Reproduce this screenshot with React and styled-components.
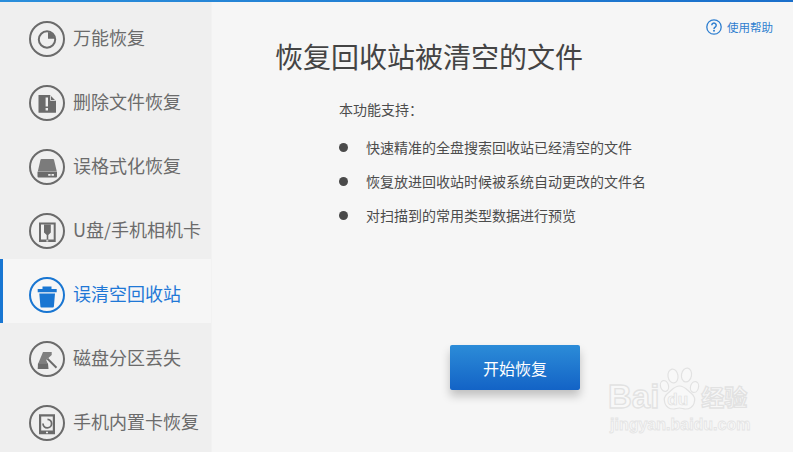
import React from 'react';
import styled, { createGlobalStyle } from 'styled-components';

const GlobalStyle = createGlobalStyle`
  html, body {
    margin: 0;
    padding: 0;
    background: #f6f6f6;
  }
  body {
    font-family: "Noto Sans CJK SC", "Liberation Sans", sans-serif;
  }
`;

const Window = styled.div`
  position: relative;
  width: 793px;
  height: 452px;
  overflow: hidden;
  display: flex;
  flex-direction: column;
  background: #f6f6f6;
`;

const TopBar = styled.div`
  flex: none;
  height: 2px;
  background: linear-gradient(90deg, #2a8edb, #1a6fcb);
`;

const Body = styled.div`
  flex: 1;
  display: flex;
  min-height: 0;
`;

const Sidebar = styled.nav`
  flex: none;
  width: 211px;
  padding-top: 1px;
  background: #efefef;
  border-right: 1px solid #f2f2f2;
`;

const NavRow = styled.div`
  box-sizing: border-box;
  height: 64px;
  padding: 18px 0 0 26px;
  display: flex;
  align-items: flex-start;
  gap: 8px;
  color: ${({ $active }) => ($active ? '#1f78d6' : '#6b6b6b')};
  background: ${({ $active }) => ($active ? '#f6f6f6' : 'transparent')};
  border-left: 3px solid ${({ $active }) => ($active ? '#1976d2' : 'transparent')};
`;

const NavIcon = styled.svg`
  flex: none;
  width: 36px;
  height: 36px;
`;

const NavLabel = styled.span`
  font-size: 18px;
  line-height: 36px;
  white-space: nowrap;
  margin-top: -2px;
`;

const Main = styled.main`
  position: relative;
  flex: 1;
  padding: 34px 0 0 63px;
`;

const HelpLink = styled.a`
  position: absolute;
  top: 16px;
  right: 20px;
  display: flex;
  align-items: center;
  gap: 5px;
  font-size: 11.5px;
  line-height: 18px;
  color: #2f7fd0;
`;

const Title = styled.h1`
  margin: 0;
  font-size: 28px;
  font-weight: 400;
  line-height: 40px;
  color: #444;
`;

const Details = styled.div`
  margin: 23px 0 0 64px;
  font-size: 14px;
  color: #4c4c4c;
`;

const Intro = styled.div`
  line-height: 20px;
`;

const FeatureList = styled.ul`
  list-style: none;
  margin: 18px 0 0;
  padding: 0;
  display: flex;
  flex-direction: column;
  gap: 14px;
`;

const Feature = styled.li`
  display: flex;
  align-items: center;
  gap: 18px;
  line-height: 20px;
  white-space: nowrap;

  &::before {
    content: '';
    width: 9px;
    height: 9px;
    border-radius: 50%;
    background: #4a4a4a;
  }
`;

const StartButton = styled.button`
  position: absolute;
  top: 343px;
  left: 238px;
  width: 130px;
  height: 45px;
  border: 0;
  border-radius: 2px;
  background: linear-gradient(180deg, #2c8cd8, #1363c6);
  box-shadow: 0 6px 10px rgba(0, 0, 0, 0.22);
  color: #fff;
  font-family: inherit;
  font-size: 16px;
`;

const Watermark = styled.div`
  position: absolute;
  left: 608px;
  top: 367px;
  width: 150px;
  height: 70px;
  pointer-events: none;
`;

const MarkRow = styled.div`
  display: flex;
  align-items: flex-end;
  height: 44px;
  font-family: "Liberation Sans", sans-serif;
  font-weight: 700;
  font-size: 33px;
  line-height: 29px;
  color: #f8f8f8;
  -webkit-text-stroke: 1.3px #e2e2e2;
`;

const MarkCjk = styled.span`
  margin-left: 1px;
  font-family: "Noto Sans CJK SC", sans-serif;
  font-size: 23px;
  line-height: 29px;
  font-weight: 700;
`;

const PawWrap = styled.span`
  position: relative;
  flex: none;
  width: 41px;
  height: 44px;
  display: block;
`;

const PawText = styled.span`
  position: absolute;
  left: 8px;
  bottom: 1px;
  font-size: 17px;
  line-height: 20px;
  -webkit-text-stroke: 0.7px #e0e0e0;
`;

const MarkUrl = styled.div`
  margin-top: 5px;
  margin-left: 2px;
  font-family: "Liberation Sans", sans-serif;
  font-size: 16px;
  font-weight: 700;
  line-height: 18px;
  color: #f8f8f8;
  -webkit-text-stroke: 0.8px #e4e4e4;
`;

const ring = (color) => <circle cx="18" cy="18" r="17" fill="none" stroke={color} strokeWidth="2" />;

const navItems = [
  {
    label: '万能恢复',
    art: (c) => (
      <>
        <circle cx="18" cy="18.500" r="8.200" fill="none" stroke={c} strokeWidth="2" />
        <path d="M19 11a7 7 0 0 1 6.500 6.800H19z" fill={c} />
      </>
    ),
  },
  {
    label: '删除文件恢复',
    art: (c) => (
      <>
        <path
          fillRule="evenodd"
          d="M9.500 10h11.500l6 6v11.200a.6.600 0 0 1-.6.600H10.100a.6.600 0 0 1-.6-.6zM16.600 12.500v9h2.400v-9zm0 10.500v2.500h2.400V23z"
          fill={c}
        />
        <path d="M21.500 10.500v5h5" fill="none" stroke="#efefef" strokeWidth="0.800" />
      </>
    ),
  },
  {
    label: '误格式化恢复',
    art: (c) => (
      <>
        <path d="M12.500 10h11.500a1 1 0 0 1 1 .8L27.800 22.500H8.800L11.500 10.800a1 1 0 0 1 1-.8z" fill={c} opacity="0.88" />
        <path
          fillRule="evenodd"
          d="M8.500 22.800h19.500V27.500a1 1 0 0 1-1 1h-17.500a1 1 0 0 1-1-1zM19.200 25v1.800h2.400V25zm3.300 0v1.800h2.400V25z"
          fill={c}
        />
      </>
    ),
  },
  {
    label: 'U盘/手机相机卡',
    art: (c) => (
      <>
        <path
          fillRule="evenodd"
          d="M10 9.500h16.700v19.500H10zM12 11.500v15h12.700v-15zM17.300 27.200v1.200h2v-1.200z"
          fill={c}
        />
        <path d="M15 11.500h6.800v8l-2.500 2.600v4.400h-1.600v-4.400L15 19.500z" fill={c} />
      </>
    ),
  },
  {
    label: '误清空回收站',
    active: true,
    art: (c) => (
      <>
        <path d="M13.500 9.500h9V12h5.200v3.300H8.700V12h4.800z" fill={c} />
        <path d="M10.300 16.400h15.700l-1.100 13.200a1 1 0 0 1-1 .9H12.400a1 1 0 0 1-1-.9z" fill={c} />
      </>
    ),
  },
  {
    label: '磁盘分区丢失',
    art: (c) => (
      <>
        <path d="M14 11h8.700v3l-5.500 5 1.500 3.500H9.200z" fill={c} opacity="0.85" />
        <path d="M9 22.300h10l.5 5.700H8.700z" fill={c} />
        <path d="M18.500 17.700l9 9" stroke={c} strokeWidth="2" />
      </>
    ),
  },
  {
    label: '手机内置卡恢复',
    art: (c) => (
      <>
        <path
          fillRule="evenodd"
          d="M10 9.300h16v20H10zM12.200 11.500v14h11.600v-14zM17 26.700v1.500h2v-1.500z"
          fill={c}
        />
        <path d="M18.500 14.300a4.300 4.300 0 1 1-4.500 4.300" fill="none" stroke={c} strokeWidth="1.800" />
      </>
    ),
  },
];

const features = [
  '快速精准的全盘搜索回收站已经清空的文件',
  '恢复放进回收站时候被系统自动更改的文件名',
  '对扫描到的常用类型数据进行预览',
];

const HelpIcon = () => (
  <svg width="16" height="16" viewBox="0 0 16 16">
    <circle cx="8" cy="8" r="7.200" fill="none" stroke="#2f7fd0" strokeWidth="1.300" />
    <path
      d="M5.800 6.300a2.200 2.200 0 1 1 3.400 1.800c-.8.500-1.200.9-1.200 1.800"
      fill="none"
      stroke="#2f7fd0"
      strokeWidth="1.500"
    />
    <circle cx="8" cy="11.800" r="1" fill="#2f7fd0" />
  </svg>
);

const Paw = () => (
  <svg width="41" height="44" viewBox="0 0 41 44">
    <g fill="#f8f8f8" stroke="#e2e2e2" strokeWidth="1.200">
      <ellipse cx="14" cy="9" rx="5" ry="7" transform="rotate(-8 14 9)" />
      <ellipse cx="27.500" cy="8" rx="5" ry="7" transform="rotate(10 27.500 8)" />
      <ellipse cx="5.500" cy="19" rx="4" ry="5.500" transform="rotate(-15 5.500 19)" />
      <ellipse cx="35.500" cy="20" rx="4" ry="5.500" transform="rotate(15 35.500 20)" />
      <path d="M20.500 19c5 0 7 3.500 12 7.500 6 5 3 15.500-6 15.500-2.500 0-3.500-1-6-1s-3.500 1-6 1c-9 0-12-10.500-6-15.500 5-4 7-7.500 12-7.500z" />
    </g>
  </svg>
);

const App = () => (
  <Window>
    <GlobalStyle />
    <TopBar />
    <Body>
      <Sidebar>
        {navItems.map((item) => {
          const color = item.active ? '#1976d2' : '#6b6b6b';
          return (
            <NavRow key={item.label} $active={item.active}>
              <NavIcon viewBox="0 0 36 36">
                {ring(color)}
                {item.art(color)}
              </NavIcon>
              <NavLabel>{item.label}</NavLabel>
            </NavRow>
          );
        })}
      </Sidebar>
      <Main>
        <HelpLink>
          <HelpIcon />
          使用帮助
        </HelpLink>
        <Title>恢复回收站被清空的文件</Title>
        <Details>
          <Intro>本功能支持：</Intro>
          <FeatureList>
            {features.map((text) => (
              <Feature key={text}>{text}</Feature>
            ))}
          </FeatureList>
        </Details>
        <StartButton>开始恢复</StartButton>
      </Main>
    </Body>
    <Watermark>
      <MarkRow>
        Bai
        <PawWrap>
          <Paw />
          <PawText>du</PawText>
        </PawWrap>
        <MarkCjk>经验</MarkCjk>
      </MarkRow>
      <MarkUrl>jingyan.baidu.com</MarkUrl>
    </Watermark>
  </Window>
);

export default App;
